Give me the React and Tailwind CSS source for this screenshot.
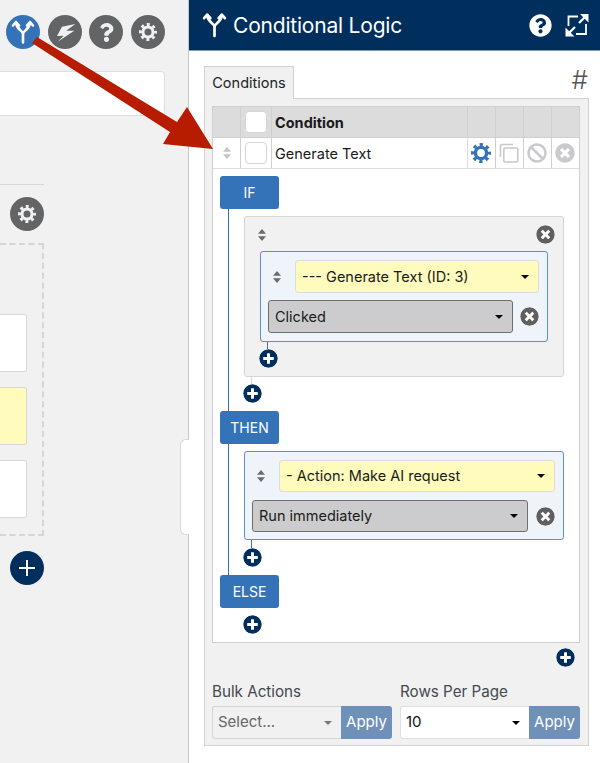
import React from "react";
import { FaQuestionCircle, FaTimesCircle, FaPlusCircle, FaBan, FaQuestion } from "react-icons/fa";

const font = { fontFamily: "Inter, 'Liberation Sans', sans-serif" };

function Fork({ className }) {
  return (
    <svg viewBox="0 0 24 24" className={className} fill="none" stroke="currentColor" strokeWidth="2.6" strokeLinecap="round" strokeLinejoin="round">
      <path d="M12 22.5V13.5C12 11 5.8 9.5 5 3" />
      <path d="M12 13.5C12 11 18.2 9.5 19 3" />
      <path d="M2 5.5L5 2L8 5.5M16 5.5L19 2L22 5.5" />
    </svg>
  );
}

function Gear({ className }) {
  return (
    <svg viewBox="0 0 20 20" className={className} fill="none" stroke="currentColor">
      <circle cx="10" cy="10" r="5.6" strokeWidth="3.4" />
      <circle cx="10" cy="10" r="8.4" strokeWidth="3.2" strokeDasharray="3.3 3.3" strokeDashoffset="1.65" />
    </svg>
  );
}

function Bolt({ className }) {
  return (
    <svg viewBox="0 0 34 34" className={className} fill="currentColor">
      <path d="M27.3 9L14 11.7L9 21L15.7 20.7L9.7 26.7L26.3 15.7L18.3 15.7Z" />
    </svg>
  );
}

function Sort({ className = "text-[#6b6b6b]" }) {
  return (
    <svg viewBox="0 0 8 12" className={`w-[8px] h-[12px] ${className}`} fill="currentColor">
      <path d="M4 0L8 4.7H0Z" />
      <path d="M4 12L8 7.3H0Z" />
    </svg>
  );
}

function Caret({ color = "text-black" }) {
  return (
    <svg viewBox="0 0 8 4" className={`w-[8px] h-[4px] ${color}`} fill="currentColor">
      <path d="M0 0H8L4 4Z" />
    </svg>
  );
}

function Select({ className, children, caret }) {
  return (
    <div className={`flex items-center justify-between rounded-[3px] pl-[6px] pr-[9px] text-[14.5px] text-[#1a1a1a] h-[33px] ${className}`}>
      <span>{children}</span>
      <Caret color={caret} />
    </div>
  );
}

function Yellow({ className, children }) {
  return <Select className={`bg-[#fefbbd] border border-[#dcdcdc] ${className}`}>{children}</Select>;
}

function Gray({ className, children }) {
  return <Select className={`bg-[#ccccce] border border-[#6f6f6f] ${className}`}>{children}</Select>;
}

function Plus({ className = "" }) {
  return <FaPlusCircle className={`block w-[19px] h-[19px] text-[#002e5d] bg-white rounded-full ${className}`} />;
}

function Remove() {
  return <FaTimesCircle className="block w-[19px] h-[19px] text-[#5f5f5f] bg-white rounded-full shrink-0" />;
}

function Step({ children }) {
  return (
    <div className="w-[59px] h-[33px] rounded-[3px] bg-[#3573b8] text-white text-[14px] flex items-center justify-center ml-[7px]">
      {children}
    </div>
  );
}

function RoundIcon({ className = "bg-[#636466]", children }) {
  return <div className={`w-[34px] h-[34px] rounded-full flex items-center justify-center text-[#f1f1f1] shrink-0 ${className}`}>{children}</div>;
}

function ApplyGroup({ className = "", left, children, caret }) {
  return (
    <div className={`flex h-[33px] w-[180px] ${className}`}>
      <div className={`flex-1 flex items-center justify-between pl-[5px] pr-[9px] rounded-l-[3px] border border-r-0 text-[15px] ${left}`}>
        <span>{children}</span>
        <Caret color={caret} />
      </div>
      <div className="w-[51px] bg-[#6f90b8] text-white text-[15px] rounded-r-[3px] flex items-center justify-center">Apply</div>
    </div>
  );
}

function HeadCell({ className = "w-[28px]", children }) {
  return <div className={`h-full border-r border-[#d0d0d4] flex items-center justify-center shrink-0 ${className}`}>{children}</div>;
}

function Check() {
  return <div className="w-[22px] h-[22px] bg-white border border-[#d5d5d5] rounded-[4px]" />;
}

function LeftCard({ className }) {
  return <div className={`w-[27px] h-[58px] border border-l-0 border-[#d8d8d8] rounded-r-[3px] ${className}`} />;
}

export default function App() {
  return (
    <div className="relative flex w-[600px] h-[763px] overflow-hidden bg-white" style={font}>
      <div className="w-[189px] h-full bg-[#f1f1f1] border-r border-[#c9c9c9] shrink-0 pt-[15px]">
        <div className="flex gap-[7.5px] pl-[6px]">
          <RoundIcon className="bg-[#3573b8]"><Fork className="w-[24px] h-[24px] text-white" /></RoundIcon>
          <RoundIcon><Bolt className="w-[34px] h-[34px]" /></RoundIcon>
          <RoundIcon><FaQuestion className="w-[19px] h-[19px]" /></RoundIcon>
          <RoundIcon><Gear className="w-[18px] h-[18px]" /></RoundIcon>
        </div>
        <div className="mt-[22px] w-[165px] h-[45px] bg-white border border-l-0 border-[#dedede] rounded-r-[4px]" />
        <div className="mt-[68px] w-[44px] h-px bg-[#d6d6d6]" />
        <div className="ml-[10px] mt-[12px]">
          <RoundIcon><Gear className="w-[18px] h-[18px]" /></RoundIcon>
        </div>
        <div className="mt-[12px] w-[44px] h-[293px] border-2 border-l-0 border-dashed border-[#d6d6d6] pt-[69px] flex flex-col gap-[15px]">
          <LeftCard className="bg-white" />
          <LeftCard className="bg-[#fefbbd]" />
          <LeftCard className="bg-white" />
        </div>
        <div className="ml-[10px] mt-[15px]">
          <RoundIcon className="bg-[#002e5d]">
            <span className="relative w-[16px] h-[16px] before:absolute before:left-[7px] before:top-0 before:w-[2px] before:h-[16px] before:bg-white after:absolute after:left-0 after:top-[7px] after:h-[2px] after:w-[16px] after:bg-white" />
          </RoundIcon>
        </div>
      </div>

      <div className="flex-1 min-w-0">
        <div className="h-[51px] bg-[#002e5d] border-b border-[#7f9bbb] flex items-center pl-[13px] pr-[11px] text-white">
          <Fork className="w-[25px] h-[28px]" />
          <span className="ml-[6px] pt-[2px] text-[21px] tracking-[-0.2px]">Conditional Logic</span>
          <FaQuestionCircle className="ml-auto w-[23px] h-[23px]" />
          <svg viewBox="0 0 24 24" className="ml-[13px] w-[24px] h-[24px]" fill="none" stroke="white" strokeWidth="1.8">
            <path d="M13 3.5H3.5V13M11 21H21V11" />
            <path d="M14 10L22 2M10 14L2 22" strokeWidth="2.2" />
            <path d="M15 1H23.5V9.5L15 1ZM0.5 14.5V23.5H9.5L0.5 14.5Z" fill="white" stroke="none" />
          </svg>
        </div>

        <div className="pl-[15px] pt-[14px]">
          <div className="flex items-end w-[384px] h-[33px]">
            <div className="w-[90px] h-[33px] bg-[#f1f1f1] border border-b-0 border-[#d2d2d2] flex items-center justify-center text-[14.5px] text-[#222] relative top-px z-10">
              Conditions
            </div>
            <span className="ml-auto mb-[6px] text-[26px] leading-[24px] font-light text-[#555]">#</span>
          </div>
          <div className="w-[385px] h-[648px] bg-[#f1f1f1] border border-[#d2d2d2] pl-[7px] pt-[7px]">
            <div className="w-[368px] h-[537px] border border-[#d0d0d4] bg-white">
              <div className="flex h-[31px] bg-[#dcdcdc] border-b border-[#d0d0d4] font-bold text-[14.5px] text-[#1a1a1a]">
                <HeadCell className="w-[28px]" />
                <HeadCell className="w-[31px]"><Check /></HeadCell>
                <div className="flex-1 h-full border-r border-[#d0d0d4] flex items-center pl-[3px] pt-[1px]">Condition</div>
                <HeadCell />
                <HeadCell />
                <HeadCell />
                <div className="w-[27px]" />
              </div>
              <div className="flex h-[31px] border-b border-[#dcdcdc] text-[14.5px] text-[#1a1a1a]">
                <HeadCell className="w-[28px]"><Sort className="text-[#c4c4c8]" /></HeadCell>
                <HeadCell className="w-[31px]"><Check /></HeadCell>
                <div className="flex-1 h-full border-r border-[#dcdcdc] flex items-center pl-[3px] pt-[1px]">Generate Text</div>
                <HeadCell className="w-[28px] pr-[2px]"><Gear className="w-[20px] h-[20px] text-[#3573b8]" /></HeadCell>
                <HeadCell className="w-[28px] pr-[2px]">
                  <svg viewBox="0 0 20 20" className="w-[20px] h-[20px]" fill="none" stroke="#c9c9cd" strokeWidth="1.6">
                    <path d="M14 1.5H3A1.5 1.5 0 0 0 1.5 3V14" />
                    <rect x="4.8" y="5" width="14" height="14" rx="1.5" />
                  </svg>
                </HeadCell>
                <HeadCell className="w-[28px] pr-[2px]"><FaBan className="w-[20px] h-[20px] text-[#cacace]" /></HeadCell>
                <div className="w-[27px] pr-[2px] flex items-center justify-center"><FaTimesCircle className="w-[20px] h-[20px] text-[#cacace]" /></div>
              </div>

              <div className="pt-[7px]">
                <Step>IF</Step>
                <div className="ml-[15px] border-l border-[#3573b8] pl-[15px] pt-[7px] pb-[8px]">
                  <div className="w-[320px] h-[161px] bg-[#f1f1f1] border border-[#d6d6d6] rounded-[3px] pt-[8px] pl-[15px]">
                    <div className="flex items-center justify-between h-[19px] pr-[8px] -ml-[2px]">
                      <Sort />
                      <Remove />
                    </div>
                    <div className="mt-[7px] w-[288px] h-[91px] bg-[#eff3fa] border border-[#5f8fc5] rounded-[3px] pl-[7px] pr-[8px] pt-[8px] flex flex-col gap-[7px]">
                      <div className="flex items-center">
                        <span className="w-[27px] pl-[5px]"><Sort /></span>
                        <Yellow className="flex-1">--- Generate Text (ID: 3)</Yellow>
                      </div>
                      <div className="flex items-center gap-[7px]">
                        <Gray className="flex-1">Clicked</Gray>
                        <Remove />
                      </div>
                    </div>
                    <div className="ml-[7px] w-px h-[7px] bg-[#3573b8]" />
                    <Plus className="-ml-px" />
                  </div>
                  <div className="ml-[7px] w-px h-[7px] bg-[#d6d6d6]" />
                  <Plus className="-ml-px" />
                </div>
                <Step>THEN</Step>
                <div className="ml-[15px] border-l border-[#3573b8] pl-[15px] pt-[7px] pb-[8px]">
                  <div className="w-[320px] h-[89px] bg-[#eff3fa] border border-[#5f8fc5] rounded-[3px] pl-[7px] pr-[8px] pt-[8px] flex flex-col gap-[8px]">
                    <div className="flex items-center">
                      <span className="w-[27px] pl-[5px]"><Sort /></span>
                      <Yellow className="flex-1 !h-[32px]">- Action: Make AI request</Yellow>
                    </div>
                    <div className="flex items-center gap-[8px]">
                      <Gray className="flex-1 !h-[32px]">Run immediately</Gray>
                      <Remove />
                    </div>
                  </div>
                  <div className="ml-[7px] w-px h-[8px] bg-[#3573b8]" />
                  <Plus className="-ml-px" />
                </div>
                <Step>ELSE</Step>
                <div className="ml-[30px] pt-[7px]"><Plus /></div>
              </div>
            </div>

            <div className="w-[363px] flex justify-end mt-[5px]"><Plus className="bg-[#f1f1f1]" /></div>
            <div className="flex gap-[8px] mt-[16px] text-[15.2px] text-[#44494f] leading-[18px]">
              <div className="w-[180px]">Bulk Actions</div>
              <div>Rows Per Page</div>
            </div>
            <div className="flex gap-[8px] mt-[5px]">
              <ApplyGroup left="bg-[#f1f1f1] border-[#d6d6d6] text-[#666]" caret="text-[#777]">Select...</ApplyGroup>
              <ApplyGroup left="bg-white border-[#e0e0e0] text-[#111]" caret="text-black">10</ApplyGroup>
            </div>
          </div>
        </div>
      </div>

      <div className="absolute left-[180px] top-[439px] w-[9px] h-[96px] bg-white border border-r-0 border-[#d8d8d8] rounded-l-[6px]" />

      <svg viewBox="0 0 600 763" className="absolute inset-0 w-[600px] h-[763px] pointer-events-none">
        <polygon points="37,37 177,122 187,107 213,149 163,144 170,132 32,43" fill="#b71c00" />
      </svg>
    </div>
  );
}
